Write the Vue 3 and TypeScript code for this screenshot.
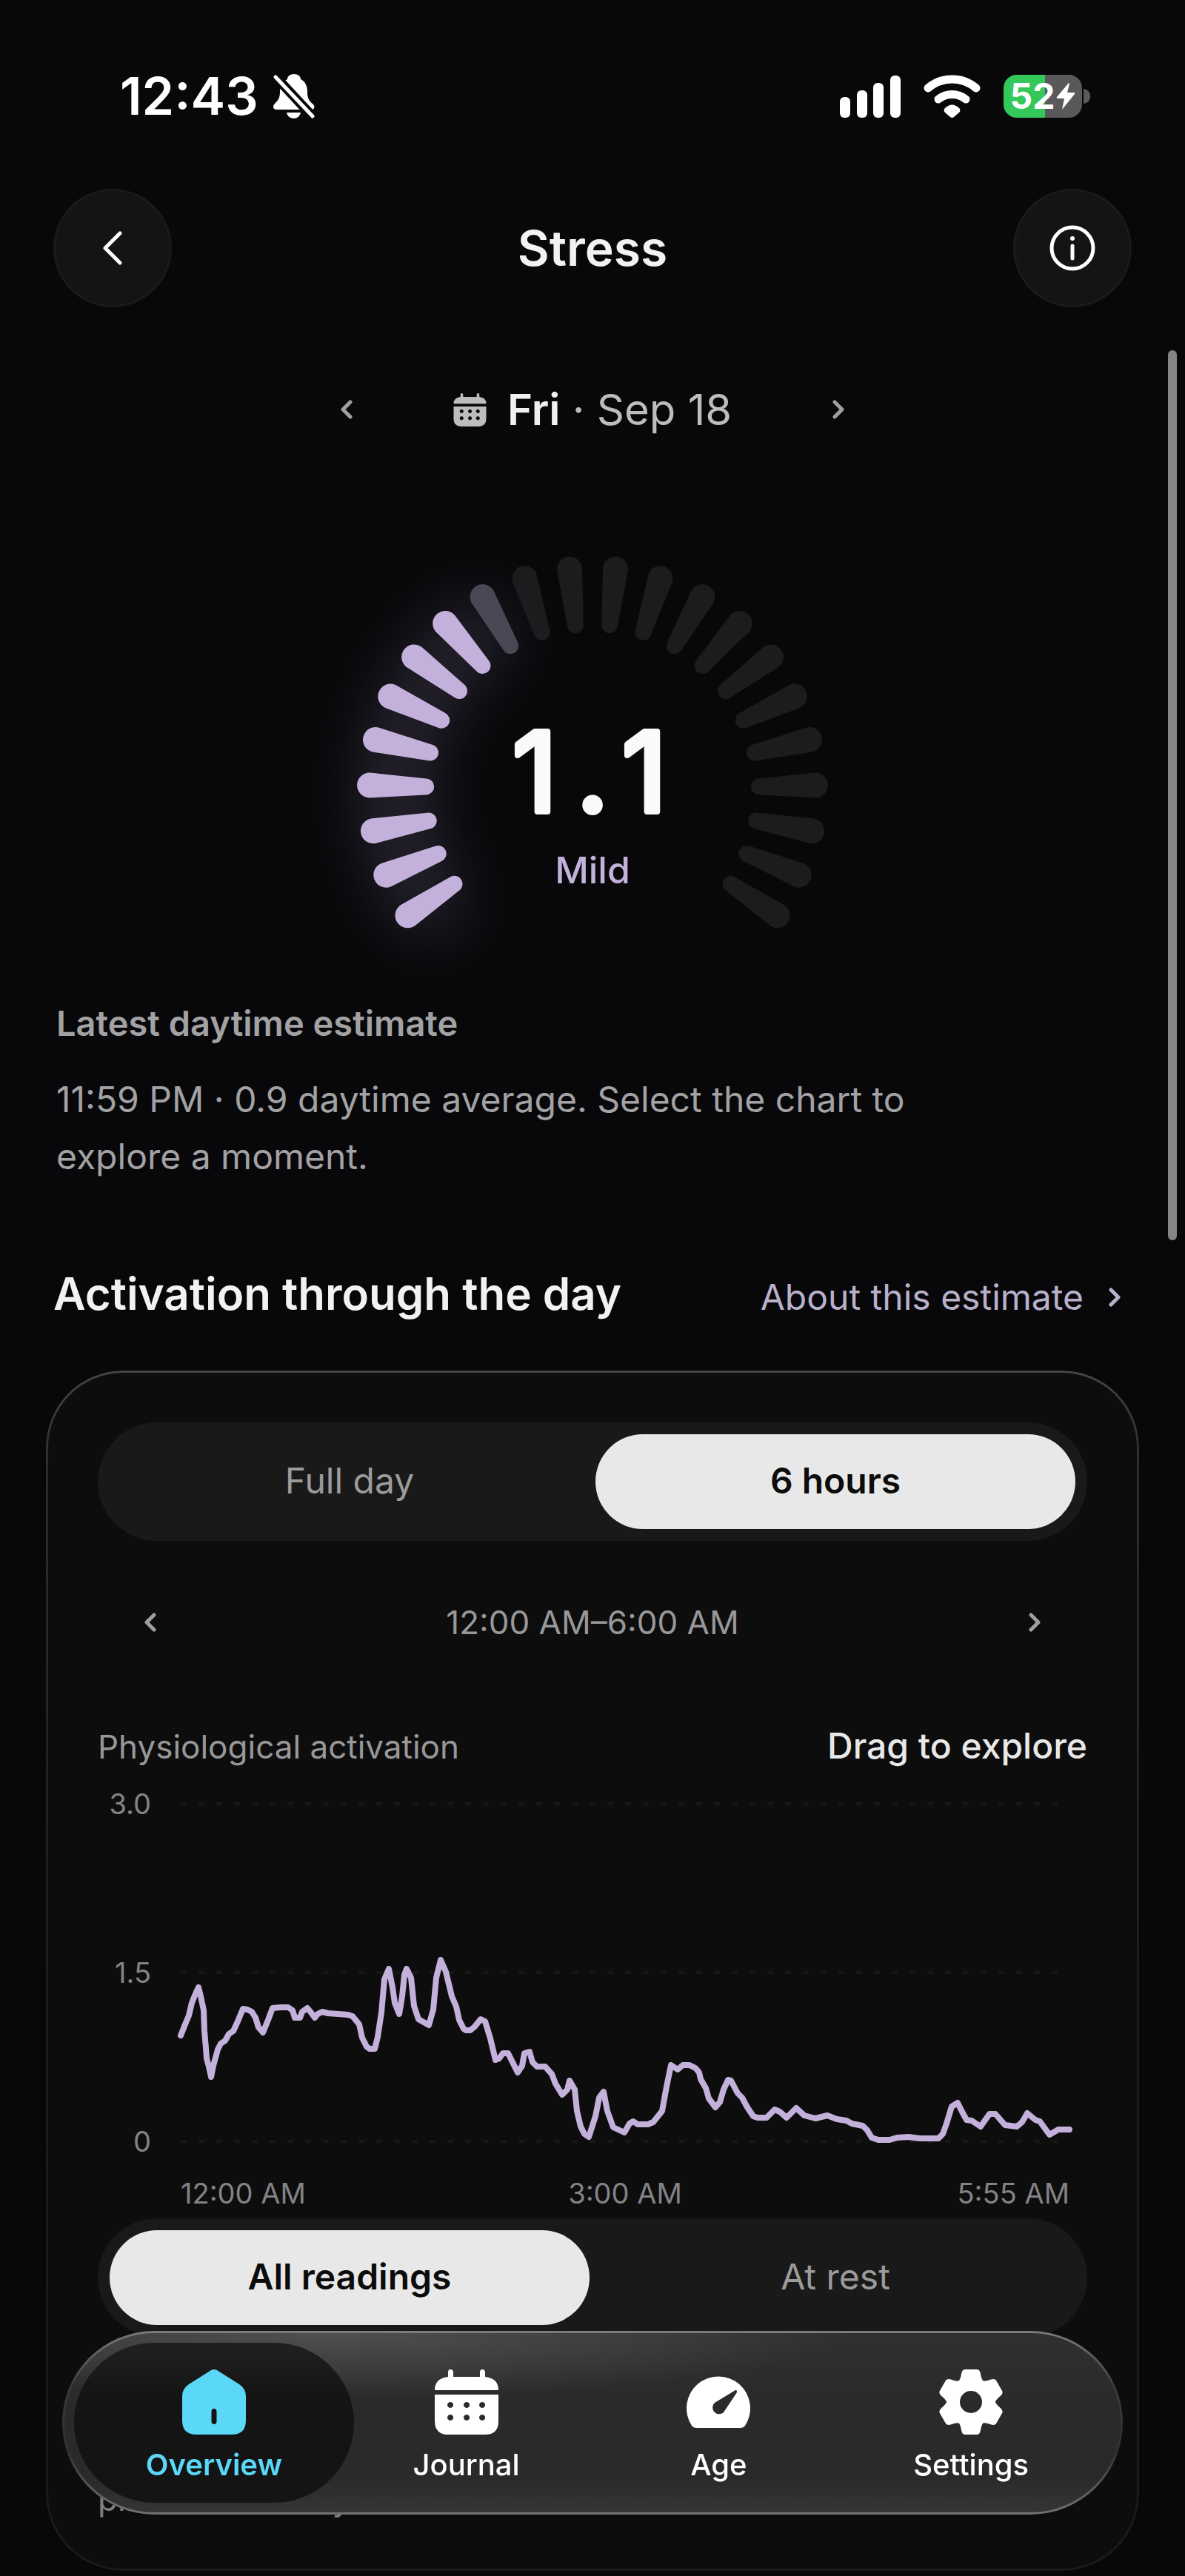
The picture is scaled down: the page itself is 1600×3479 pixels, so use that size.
<script setup lang="ts">
import { computed, ref } from 'vue'

type Tab = 'Overview' | 'Journal' | 'Age' | 'Settings'

const windowMode = ref<string>('6 hours')
const readingMode = ref<string>('All readings')
const activeTab = ref<Tab>('Overview')

const windowModes: string[] = ['Full day', '6 hours']
const readingModes: string[] = ['All readings', 'At rest']
const tabs: Tab[] = ['Overview', 'Journal', 'Age', 'Settings']

// Gauge: 22 ticks spread over a 248 degree sweep, scale 0 to 3.
const tickCount = 22
const score = 1.1
const ticks = computed(() =>
  Array.from({ length: tickCount }, (_, i) => {
    const filled = (score / 3) * tickCount
    return {
      angle: -124 + (i * 248) / (tickCount - 1),
      state: i + 1 <= filled ? 'on' : i < filled ? 'part' : 'off',
    }
  }),
)

// Plot points in chart units: 1200 wide, 456 high.
const points: [number, number][] = [
  [0, 313], [6, 298], [11, 286], [15, 269], [19, 259], [24, 248], [27, 260], [31, 279], [32, 307], [34, 330],
  [35, 344], [38, 355], [41, 369], [44, 354], [50, 332], [54, 324], [60, 320], [65, 311], [71, 307], [77, 294],
  [84, 277], [90, 278], [96, 281], [101, 289], [105, 302], [111, 309], [118, 292], [124, 276], [135, 275], [145, 275],
  [151, 279], [154, 289], [161, 289], [164, 281], [171, 276], [176, 282], [181, 289], [185, 284], [191, 281], [199, 283],
  [226, 285], [232, 287], [241, 298], [245, 316], [251, 328], [255, 331], [262, 331], [266, 315], [271, 282], [275, 237],
  [281, 223], [286, 248], [289, 269], [295, 284], [299, 260], [302, 231], [305, 223], [311, 235], [315, 273], [321, 291],
  [335, 299], [341, 278], [345, 235], [351, 211], [358, 227], [366, 260], [372, 274], [376, 292], [382, 304], [385, 306],
  [391, 306], [397, 301], [405, 291], [411, 294], [418, 317], [425, 346], [430, 344], [435, 337], [442, 337], [455, 363],
  [461, 354], [464, 337], [471, 335], [475, 349], [481, 355], [492, 355], [501, 365], [506, 378], [515, 393], [522, 386],
  [525, 374], [532, 386], [535, 415], [540, 436], [545, 446], [551, 450], [560, 422], [565, 397], [571, 389], [576, 415],
  [584, 437], [599, 444], [606, 432], [611, 429], [617, 433], [631, 433], [638, 430], [650, 415], [656, 382], [662, 353],
  [671, 359], [678, 353], [687, 353], [695, 357], [700, 363], [702, 372], [709, 384], [713, 398], [722, 410], [728, 403],
  [733, 386], [739, 373], [743, 374], [752, 391], [758, 397], [765, 410], [773, 422], [779, 424], [791, 424], [802, 413],
  [809, 416], [818, 424], [831, 411], [842, 421], [857, 425], [873, 421], [886, 426], [899, 428], [906, 432], [921, 435],
  [927, 441], [933, 451], [942, 454], [957, 454], [967, 451], [983, 450], [998, 452], [1023, 452], [1029, 446], [1034, 432],
  [1041, 409], [1049, 404], [1055, 416], [1061, 427], [1068, 428], [1080, 436], [1092, 419], [1100, 419], [1113, 434],
  [1129, 436], [1136, 430], [1143, 418], [1154, 427], [1160, 429], [1173, 447], [1185, 440], [1200, 440],
]
const linePoints = computed(() => points.map((p) => p.join(',')).join(' '))
const gridLines: number[] = [0, 228, 456]
const toothAngles: number[] = [0, 60, 120, 180, 240, 300]
</script>

<template>
  <div class="screen">
    <div class="status">
      <div class="status-left">
        <span class="clock">12:43</span>
        <svg class="bell" viewBox="0 0 56 60" aria-hidden="true">
          <defs>
            <mask id="bell-cut">
              <rect width="56" height="60" fill="#fff" />
              <path d="M-2 -2 L60 65" stroke="#000" stroke-width="13" />
            </mask>
          </defs>
          <g mask="url(#bell-cut)" fill="#fff">
            <path d="M28 0 C33 0 37 3 37 7 C43 10 46 16 46 24 C46 34 49 37 54 41 C57 45 55 48 51 48 H5 C0 48 -1 45 1 41 C6 36 9 33 9 24 C9 16 13 10 19 7 C19 3 23 0 28 0 Z" />
            <path d="M18 52 H37 C36 57 32 60 28 60 C23 60 19 57 18 52 Z" />
          </g>
          <path d="M3 4 L53 57" stroke="#fff" stroke-width="5" stroke-linecap="round" />
        </svg>
      </div>
      <div class="status-right">
        <svg class="cell" viewBox="0 0 82 58" aria-hidden="true">
          <rect x="0" y="30" width="14" height="28" rx="6" />
          <rect x="23" y="21" width="14" height="37" rx="6" />
          <rect x="45" y="11" width="14" height="47" rx="6" />
          <rect x="68" y="1" width="14" height="57" rx="6" />
        </svg>
        <svg class="wifi" viewBox="0 0 77 58" aria-hidden="true">
          <g fill="none" stroke="#fff" stroke-width="11" stroke-linecap="round">
            <path d="M6 18 A50 50 0 0 1 71 18" />
            <path d="M20 33 A30 30 0 0 1 57 33" />
          </g>
          <path fill="#fff" d="M28 46 Q38.500 35 49 46 Q50 49 48 51 L41 57 Q38.500 59 36 57 L29 51 Q27 49 28 46 Z" />
        </svg>
        <div class="battery">
          <span class="battery-body">
            <span class="battery-level">52</span>
            <svg class="bolt" viewBox="0 0 26 36" aria-hidden="true">
              <path d="M17 0 L1 19 Q0 21 2 21 H11 L8 36 L25 15 Q26 13 24 13 H15 L18 1 Z" fill="#fff" />
            </svg>
          </span>
          <span class="battery-tip"></span>
        </div>
      </div>
    </div>

    <header class="top">
      <button class="round" type="button" aria-label="Back">
        <svg viewBox="0 0 26 46" width="26" height="46"><path d="M23 3 L3 23 L23 43" /></svg>
      </button>
      <h1>Stress</h1>
      <button class="round" type="button" aria-label="Information">
        <svg viewBox="0 0 62 62" width="62" height="62">
          <circle cx="31" cy="31" r="28" />
          <path d="M31 28 V45" />
          <circle class="dot" cx="31" cy="18" r="3" />
        </svg>
      </button>
    </header>

    <div class="date">
      <button class="step" type="button" aria-label="Previous day">
        <svg viewBox="0 0 16 26"><path d="M13 3 L3 13 L13 23" /></svg>
      </button>
      <button class="day" type="button">
        <svg class="day-icon" viewBox="0 0 86 88" aria-hidden="true">
          <path fill-rule="evenodd" d="M18 4 Q18 0 21 0 Q25 0 25 4 V10 H61 V4 Q61 0 64 0 Q68 0 68 4 V10 Q86 12 86 28 H0 Q0 12 18 10 Z M0 35 H86 V68 Q86 88 66 88 H20 Q0 88 0 68 Z M21 43 a5 5 0 1 0 0.100 0 Z M43 43 a5 5 0 1 0 0.100 0 Z M64 43 a5 5 0 1 0 0.100 0 Z M21 61 a5 5 0 1 0 0.100 0 Z M43 61 a5 5 0 1 0 0.100 0 Z M64 61 a5 5 0 1 0 0.100 0 Z" />
        </svg>
        <span><b>Fri</b> · Sep 18</span>
      </button>
      <button class="step" type="button" aria-label="Next day">
        <svg viewBox="0 0 16 26"><path d="M3 3 L13 13 L3 23" /></svg>
      </button>
    </div>

    <svg class="gauge" viewBox="0 0 840 640" role="img" aria-label="Stress 1.1, mild">
      <defs>
        <filter id="halo" filterUnits="userSpaceOnUse" x="-200" y="-200" width="1000" height="1100">
          <feGaussianBlur stdDeviation="42" />
        </filter>
      </defs>
      <path class="halo" filter="url(#halo)" d="M200 540 A265 265 0 0 1 265 175" />
      <g transform="translate(420 388)">
        <path
          v-for="(tick, i) in ticks"
          :key="i"
          :class="tick.state"
          :transform="`rotate(${tick.angle})`"
          d="M-17 -301 A17 17 0 0 1 17 -301 L11 -225 A11 11 0 0 1 -11 -225 Z"
        />
      </g>
      <text class="score" x="342 420 490" y="416" text-anchor="middle">1.1</text>
      <text class="level" x="420" y="513" text-anchor="middle">Mild</text>
    </svg>

    <section class="summary">
      <h2>Latest daytime estimate</h2>
      <p>11:59 PM · 0.9 daytime average. Select the chart to explore a moment.</p>
    </section>

    <div class="section-head">
      <h2>Activation through the day</h2>
      <a href="#about">
        About this estimate
        <svg viewBox="0 0 16 26" aria-hidden="true"><path d="M3 3 L13 13 L3 23" /></svg>
      </a>
    </div>

    <section class="card">
      <div class="segments" role="group" aria-label="Time window">
        <button
          v-for="mode in windowModes"
          :key="mode"
          type="button"
          :class="{ chosen: windowMode === mode }"
          :aria-pressed="windowMode === mode"
          @click="windowMode = mode"
        >{{ mode }}</button>
      </div>

      <div class="range">
        <button class="step" type="button" aria-label="Earlier">
          <svg viewBox="0 0 16 26"><path d="M13 3 L3 13 L13 23" /></svg>
        </button>
        <span>12:00 AM–6:00 AM</span>
        <button class="step" type="button" aria-label="Later">
          <svg viewBox="0 0 16 26"><path d="M3 3 L13 13 L3 23" /></svg>
        </button>
      </div>

      <div class="captions">
        <span>Physiological activation</span>
        <strong>Drag to explore</strong>
      </div>

      <div class="chart">
        <div class="y-axis"><span>3.0</span><span>1.5</span><span>0</span></div>
        <svg class="plot" viewBox="0 0 1200 456" preserveAspectRatio="none" role="img" aria-label="Physiological activation, midnight to 6 AM">
          <line v-for="y in gridLines" :key="y" x1="0" x2="1200" :y1="y" :y2="y" />
          <polyline :points="linePoints" />
        </svg>
        <div class="x-axis"><span>12:00 AM</span><span>3:00 AM</span><span>5:55 AM</span></div>
      </div>

      <div class="segments" role="group" aria-label="Readings">
        <button
          v-for="mode in readingModes"
          :key="mode"
          type="button"
          :class="{ chosen: readingMode === mode }"
          :aria-pressed="readingMode === mode"
          @click="readingMode = mode"
        >{{ mode }}</button>
      </div>

      <p class="note">previous activity</p>
    </section>

    <div class="scroll-thumb"></div>

    <nav class="tabs">
      <button
        v-for="tab in tabs"
        :key="tab"
        type="button"
        :class="{ active: activeTab === tab }"
        @click="activeTab = tab"
      >
        <svg v-if="tab === 'Overview'" viewBox="0 0 86 88" aria-hidden="true">
          <path fill-rule="evenodd" d="M36 3 Q43 -3 50 3 L77 20 Q86 26 86 36 V69 Q86 88 67 88 H19 Q0 88 0 69 V36 Q0 26 9 20 Z M43 53 Q39.500 53 39.500 57 V70 Q39.500 74 43 74 Q46.500 74 46.500 70 V57 Q46.500 53 43 53 Z" />
        </svg>
        <svg v-else-if="tab === 'Journal'" viewBox="0 0 86 88" aria-hidden="true">
          <path fill-rule="evenodd" d="M18 4 Q18 0 21 0 Q25 0 25 4 V10 H61 V4 Q61 0 64 0 Q68 0 68 4 V10 Q86 12 86 28 H0 Q0 12 18 10 Z M0 34 H86 V70 Q86 88 68 88 H18 Q0 88 0 70 Z M21 44 a4 4 0 1 0 0.100 0 Z M43 44 a4 4 0 1 0 0.100 0 Z M64 44 a4 4 0 1 0 0.100 0 Z M21 61 a4 4 0 1 0 0.100 0 Z M43 61 a4 4 0 1 0 0.100 0 Z M64 61 a4 4 0 1 0 0.100 0 Z" />
        </svg>
        <svg v-else-if="tab === 'Age'" viewBox="0 0 86 88" aria-hidden="true">
          <path fill-rule="evenodd" d="M14 79 Q9 79 7 76 A43 43 0 1 1 79 76 Q77 79 72 79 Z M66 28 L38 45 A8.500 8.500 0 1 0 50 58 L68 31 Q68 27 66 28 Z" />
        </svg>
        <svg v-else viewBox="0 0 88 88" aria-hidden="true">
          <defs>
            <mask id="gear-hole">
              <rect width="88" height="88" fill="#fff" />
              <circle cx="44" cy="44" r="15" fill="#000" />
            </mask>
          </defs>
          <g mask="url(#gear-hole)">
            <circle cx="44" cy="44" r="33" />
            <path
              v-for="angle in toothAngles"
              :key="angle"
              :transform="`translate(44 44) rotate(${angle})`"
              d="M-19 -25 Q-14 -30 -13 -38 Q-12 -44 -8 -44 H8 Q12 -44 13 -38 Q14 -30 19 -25 Z"
            />
          </g>
        </svg>
        <span>{{ tab }}</span>
      </button>
    </nav>
  </div>
</template>

<style>
html,
body {
  background: #08080a;
}
</style>

<style scoped>
.screen {
  position: relative;
  box-sizing: border-box;
  min-height: 100vh;
  padding: 97px 62px 7px;
  background: #08080a;
  color: #f2f2f2;
  font-family: Inter, "Liberation Sans", sans-serif;
}

h1,
h2,
p {
  margin: 0;
}

button {
  padding: 0;
  border: 0;
  background: none;
  color: inherit;
  font: inherit;
  cursor: pointer;
}

.status {
  display: flex;
  justify-content: space-between;
  align-items: center;
  height: 66px;
  padding: 0 66px 0 100px;
}

.status-left,
.status-right {
  display: flex;
  align-items: center;
}

.status-left {
  gap: 20px;
}

.clock {
  color: #fff;
  font-size: 70px;
  font-weight: 600;
  line-height: 66px;
}

.bell {
  width: 56px;
  height: 60px;
}

.status-right {
  gap: 31px;
}

.cell {
  width: 82px;
  height: 58px;
  fill: #fff;
}

.wifi {
  width: 77px;
  height: 58px;
}

.battery {
  display: flex;
  align-items: center;
  gap: 2px;
}

.battery-body {
  display: flex;
  align-items: center;
  justify-content: center;
  gap: 2px;
  width: 106px;
  height: 58px;
  border-radius: 18px;
  background: linear-gradient(to right, #34c759 53%, #59595b 53%);
}

.battery-level {
  color: #fff;
  font-size: 48px;
  font-weight: 700;
  line-height: 58px;
}

.bolt {
  width: 26px;
  height: 36px;
}

.battery-tip {
  width: 9px;
  height: 20px;
  border-radius: 0 9px 9px 0;
  background: #59595b;
}

.top {
  display: flex;
  justify-content: space-between;
  align-items: center;
  margin-top: 92px;
  padding: 0 10px;
}

.top h1 {
  font-size: 66px;
  font-weight: 600;
  line-height: 88px;
}

.round {
  display: flex;
  align-items: center;
  justify-content: center;
  box-sizing: border-box;
  width: 160px;
  height: 160px;
  border: 3px solid #1a1a1a;
  border-radius: 50%;
  background: #141414;
}

.round svg {
  fill: none;
  stroke: #fff;
  stroke-width: 5;
  stroke-linecap: round;
  stroke-linejoin: round;
}

.round .dot {
  fill: #fff;
  stroke: none;
}

.date {
  display: flex;
  justify-content: center;
  align-items: center;
  gap: 104px;
  height: 96px;
  margin-top: 90px;
}

.step {
  display: flex;
  align-items: center;
  justify-content: center;
  width: 80px;
  height: 96px;
}

.step svg,
.section-head svg {
  width: 16px;
  height: 26px;
  fill: none;
  stroke: #a0a0a0;
  stroke-width: 5;
  stroke-linecap: round;
  stroke-linejoin: round;
}

.day {
  display: flex;
  align-items: center;
  gap: 28px;
  color: #bdbdbd;
  font-size: 58px;
  line-height: 80px;
  white-space: nowrap;
}

.day b {
  color: #f0f0f0;
  font-weight: 600;
}

.day-icon {
  width: 45px;
  height: 45px;
  fill: #bdbdbd;
}

.gauge {
  display: block;
  width: 840px;
  max-width: 100%;
  margin: 79px auto 0;
  overflow: visible;
}

.halo {
  fill: none;
  stroke: #8f7fae;
  stroke-width: 90;
  stroke-linecap: round;
  opacity: 0.240;
}

.on {
  fill: #c3b1db;
}

.part {
  fill: #4b4755;
}

.off {
  fill: #1c1c1e;
}

.score {
  fill: #fafafa;
  stroke: #fafafa;
  stroke-width: 8px;
  stroke-linejoin: round;
  font-size: 148px;
  font-weight: 400;
}

.level {
  fill: #c3b1db;
  font-size: 50px;
  font-weight: 500;
}

.summary {
  padding: 0 14px;
  margin-top: 32px;
  color: #a2a2a4;
}

.summary h2 {
  font-size: 47px;
  font-weight: 600;
  line-height: 60px;
}

.summary p {
  max-width: 1200px;
  margin-top: 34px;
  font-size: 48px;
  line-height: 77px;
}

.section-head {
  display: flex;
  justify-content: space-between;
  align-items: baseline;
  margin-top: 107px;
  padding: 0 25px 0 10px;
}

.section-head h2 {
  font-size: 60px;
  font-weight: 600;
  line-height: 80px;
}

.section-head a {
  display: flex;
  align-items: center;
  gap: 34px;
  color: #b9b0cb;
  font-size: 48px;
  line-height: 60px;
  text-decoration: none;
}

.section-head svg {
  stroke: #b9b0cb;
}

.card {
  position: relative;
  margin-top: 64px;
  padding: 70px 70px 67px;
  border-radius: 104px;
  background: #0d0d0d;
}

/* Rim light: brightest along the top edge, fading down the sides. */
.card::before {
  content: "";
  position: absolute;
  inset: 0;
  padding: 3px;
  border-radius: inherit;
  background: linear-gradient(to bottom, #454547, #2c2c2e 8%, #1c1c1e 50%, #1a1a1c);
  mask: linear-gradient(#000, #000) content-box exclude, linear-gradient(#000, #000);
  pointer-events: none;
}

.segments {
  display: grid;
  grid-template-columns: 1fr 1fr;
  gap: 8px;
  padding: 16px;
  border-radius: 80px;
  background: #191919;
}

.segments button {
  height: 128px;
  padding-bottom: 3px;
  border-radius: 64px;
  color: #9b9b9b;
  font-size: 48px;
}

.segments .chosen {
  background: #e8e8e8;
  color: #0c0c0c;
  font-weight: 600;
}

.range {
  display: flex;
  justify-content: space-between;
  align-items: center;
  margin-top: 62px;
  padding: 0 31px;
  color: #98989a;
  font-size: 44px;
}

.captions {
  display: flex;
  justify-content: space-between;
  align-items: baseline;
  margin-top: 89px;
  color: #98989a;
  font-size: 44px;
  line-height: 60px;
}

.captions strong {
  color: #e8e8e8;
  font-size: 48px;
  font-weight: 500;
}

.chart {
  display: grid;
  grid-template-columns: 72px 1fr;
  column-gap: 40px;
  margin: 25px 24px 12px 0;
  color: #838385;
  font-size: 38px;
  line-height: 44px;
}

.y-axis {
  display: flex;
  flex-direction: column;
  justify-content: space-between;
  text-align: right;
}

.plot {
  width: 100%;
  height: 456px;
  margin: 22px 0;
  overflow: visible;
}

.plot line {
  stroke: #171718;
  stroke-width: 4;
  stroke-dasharray: 8 16;
}

.plot polyline {
  fill: none;
  stroke: #c3b1db;
  stroke-width: 8;
  stroke-linecap: round;
  stroke-linejoin: round;
  vector-effect: non-scaling-stroke;
}

.x-axis {
  grid-column: 2;
  display: grid;
  grid-template-columns: 1fr auto 1fr;
  margin-top: 26px;
}

.x-axis span:last-child {
  text-align: right;
}

.note {
  margin-top: 189px;
  color: #808082;
  font-size: 44px;
  line-height: 60px;
}

.scroll-thumb {
  position: absolute;
  top: 473px;
  right: 11px;
  width: 12px;
  height: 1202px;
  border-radius: 6px;
  background: #858587;
}

.tabs {
  position: fixed;
  right: 84px;
  bottom: 83px;
  left: 84px;
  display: flex;
  justify-content: space-between;
  box-sizing: border-box;
  height: 248px;
  padding: 16px;
  border-radius: 124px;
  background:
    radial-gradient(ellipse 720px 90px at 25% 0, #505050, transparent),
    linear-gradient(to bottom, #303030, #2a2a2b 40%, #2a2a2b 80%, #363636);
}

.tabs::before {
  content: "";
  position: absolute;
  inset: 0;
  padding: 3px;
  border-radius: inherit;
  background: linear-gradient(to bottom, #7c7c7c, #3a3a3a 30%, #303030 65%, #747474);
  mask: linear-gradient(#000, #000) content-box exclude, linear-gradient(#000, #000);
  pointer-events: none;
}

.tabs button {
  display: flex;
  flex-direction: column;
  align-items: center;
  gap: 16px;
  flex: 0 1 378px;
  padding-top: 36px;
  margin-right: -37px;
  border-radius: 108px;
  color: #fff;
  font-size: 40px;
  font-weight: 500;
  line-height: 50px;
}

.tabs button:last-child {
  margin-right: 0;
}

.tabs .active {
  background: linear-gradient(to bottom, #202020, #141414 35%);
  color: #5bd7f8;
  font-weight: 600;
}

.tabs svg {
  width: 88px;
  height: 88px;
  fill: currentColor;
}
</style>
